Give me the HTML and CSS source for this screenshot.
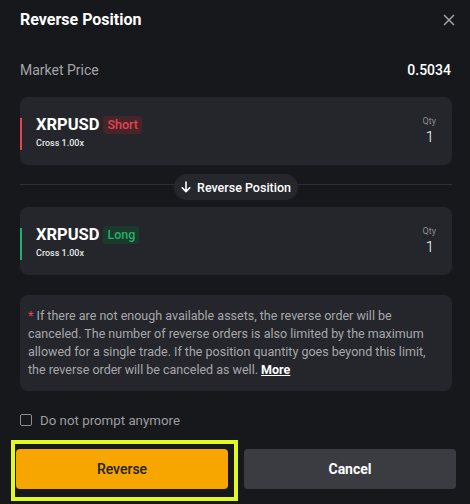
FILE: index.html
```html
<!DOCTYPE html>
<html>
<head>
<meta charset="utf-8">
<link rel="stylesheet" href="styles.css">
</head>
<body>
<div class="modal">
  <div class="header">
    <div class="title">Reverse Position</div>
    <svg class="close" width="12" height="12" viewBox="0 0 12 12"><path d="M1 1 L11 11 M11 1 L1 11" stroke="#a3a4a7" stroke-width="1.5" fill="none"/></svg>
  </div>
  <div class="price-row">
    <span class="label">Market Price</span>
    <span class="value">0.5034</span>
  </div>
  <div class="card short">
    <div class="info">
      <div class="sym-row"><span class="sym">XRPUSD</span><span class="badge badge-short">Short</span></div>
      <div class="cross">Cross 1.00x</div>
    </div>
    <div class="qty">
      <div class="qty-label">Qty</div>
      <div class="qty-val">1</div>
    </div>
  </div>
  <div class="sep">
    <div class="pill">
      <svg width="10" height="12" viewBox="0 0 10 12"><path d="M5 1 V10.5 M1.2 6.8 L5 10.6 L8.8 6.8" stroke="#fff" stroke-width="1.6" fill="none" stroke-linecap="round" stroke-linejoin="round"/></svg>
      <span>Reverse Position</span>
    </div>
  </div>
  <div class="card long">
    <div class="info">
      <div class="sym-row"><span class="sym">XRPUSD</span><span class="badge badge-long">Long</span></div>
      <div class="cross">Cross 1.00x</div>
    </div>
    <div class="qty">
      <div class="qty-label">Qty</div>
      <div class="qty-val">1</div>
    </div>
  </div>
  <div class="note"><span class="star">* </span>If there are not enough available assets, the reverse order will be canceled. The number of reverse orders is also limited by the maximum allowed for a single trade. If the position quantity goes beyond this limit, the reverse order will be canceled as well. <a class="more">More</a></div>
  <label class="check-row"><span class="checkbox"></span><span>Do not prompt anymore</span></label>
  <div class="buttons">
    <button class="btn btn-primary">Reverse</button>
    <button class="btn btn-cancel">Cancel</button>
    <div class="highlight"></div>
  </div>
</div>
</body>
</html>
```
FILE: styles.css
```css
* { box-sizing: border-box; }
html, body { margin: 0; padding: 0; }
body {
  background: #17181c;
  width: 470px;
  height: 504px;
  overflow: hidden;
  font-family: Roboto, "Noto Sans", sans-serif;
  color: #fff;
}
.modal {
  display: flex;
  flex-direction: column;
}
.header {
  height: 38px;
  display: flex;
  align-items: center;
  justify-content: space-between;
  padding: 0 15px 0 20px;
}
.title {
  font-size: 16px;
  font-weight: 700;
}
.close { margin-top: 1px; }
.price-row {
  margin-top: 22px;
  height: 20px;
  display: flex;
  align-items: center;
  justify-content: space-between;
  padding: 0 19px 0 20px;
  font-size: 14px;
}
.label { color: #a3a4a7; }
.value { font-weight: 500; }
.card {
  position: relative;
  margin: 17px 18px 0 20px;
  height: 68px;
  background: #24262b;
  border-radius: 8px;
  display: flex;
  align-items: center;
  justify-content: space-between;
  padding: 0 16px;
}
.card::before {
  content: "";
  position: absolute;
  left: 0;
  top: 21px;
  width: 2px;
  height: 32px;
}
.card.short::before { background: #e5434e; }
.card.long::before { background: #20b26c; }
.card.long { margin-top: 0; }
.info { display: flex; flex-direction: column; margin-top: 1px; }
.sym-row { display: flex; align-items: center; gap: 4px; }
.sym { font-size: 16.5px; font-weight: 700; }
.badge {
  font-size: 12.5px;
  height: 18px;
  line-height: 18px;
  padding: 0 4px;
  border-radius: 3px;
  font-weight: 500;
}
.badge-short { background: #47232a; color: #e5434e; }
.badge-long { background: #1b3a2c; color: #20b26c; }
.cross { font-size: 9px; font-weight: 500; color: #e6e6e6; margin-top: 4px; }
.qty { display: flex; flex-direction: column; align-items: flex-end; }
.qty-label { font-size: 9px; color: #8c8d90; }
.qty-val { font-size: 15.5px; font-weight: 300; margin-top: 2px; margin-right: 2px; }
.sep {
  height: 42px;
  margin: 0 18px 0 20px;
  display: flex;
  align-items: center;
  justify-content: center;
  background: linear-gradient(#2d2f34, #2d2f34) 0 19px / 100% 1px no-repeat;
}
.pill {
  height: 26px;
  width: 124px;
  border-radius: 13px;
  background: #25272c;
  display: flex;
  align-items: center;
  justify-content: center;
  gap: 6px;
  font-size: 12.5px;
  font-weight: 500;
  margin-top: 2px;
}
.note {
  margin: 20px 18px 0 20px;
  background: #24262b;
  border-radius: 8px;
  padding: 12px 8px;
  font-size: 12.5px;
  line-height: 18px;
  color: #a7a8ab;
}
.star { color: #e5434e; }
.more { color: #fff; font-weight: 700; text-decoration: underline; }
.check-row {
  margin: 21px 20px 0 20px;
  height: 16px;
  display: flex;
  align-items: center;
  gap: 8px;
  font-size: 13.3px;
  color: #9c9da0;
}
.checkbox {
  width: 12px;
  height: 12px;
  border: 1.5px solid #8c8d90;
  border-radius: 2px;
}
.buttons {
  position: relative;
  margin: 21px 14px 0 16px;
  display: flex;
  gap: 16px;
}
.btn {
  flex: 1;
  height: 40px;
  border: none;
  border-radius: 4px;
  font-family: inherit;
  font-size: 14px;
}
.btn-primary { background: #f7a600; color: #1e1e1e; font-weight: 500; }
.btn-cancel { background: #3a3c41; color: #fff; font-weight: 700; }
.highlight {
  position: absolute;
  left: -5px;
  top: -9px;
  width: 227px;
  height: 61px;
  border: 4px solid #e2fb1e;
  pointer-events: none;
}
```
